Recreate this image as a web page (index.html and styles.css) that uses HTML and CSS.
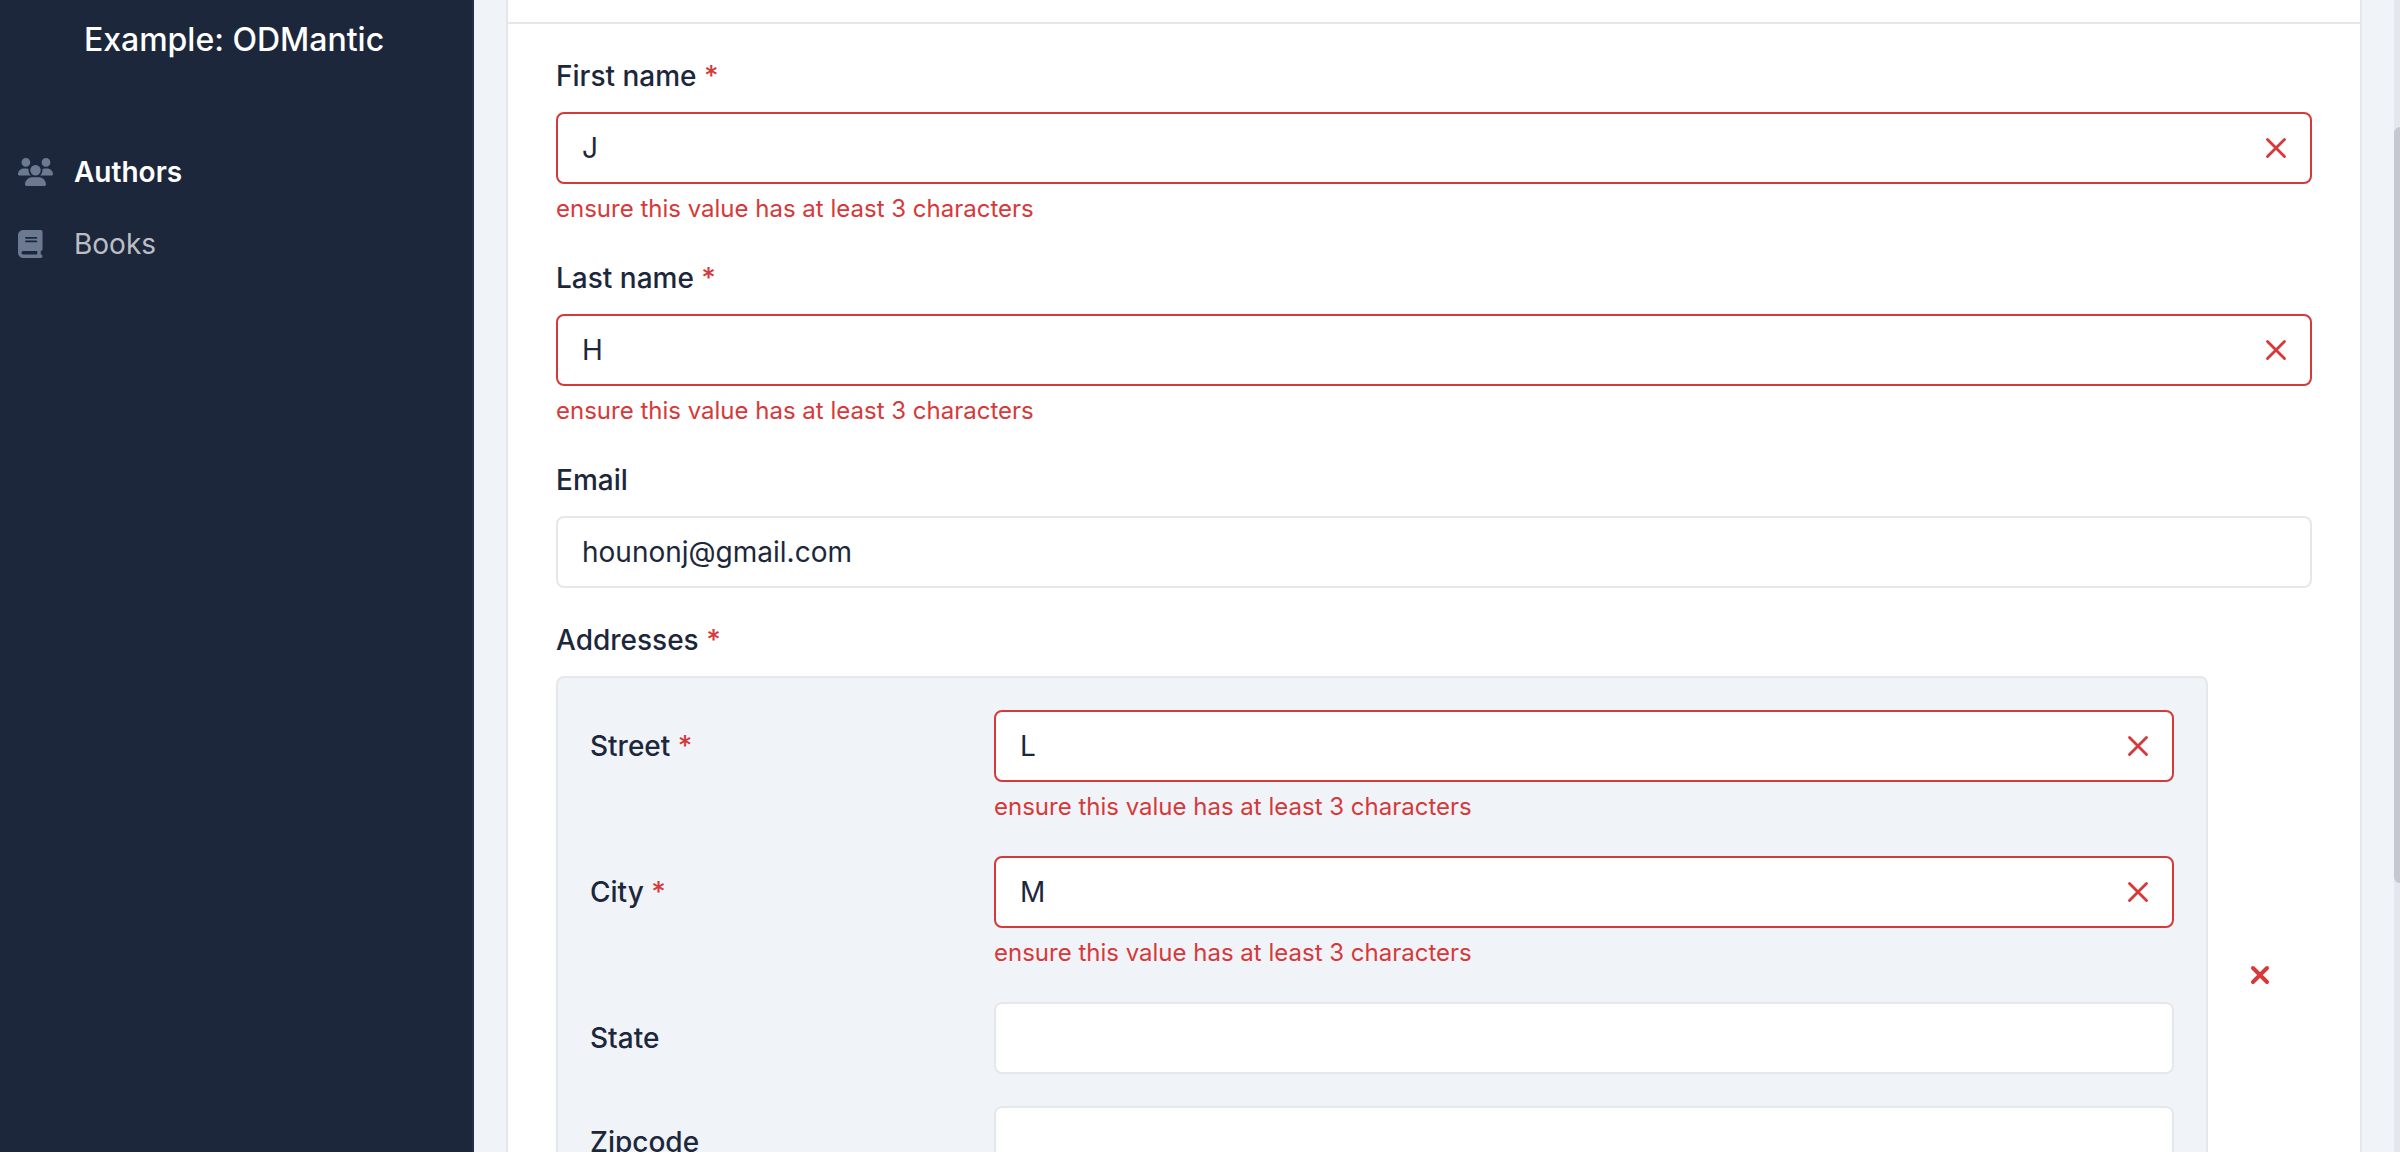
FILE: index.html
```html
<!DOCTYPE html>
<html lang="en">
<head>
  <meta charset="UTF-8" />
  <meta name="viewport" content="width=device-width, initial-scale=1.0"/>
  <title>Example: ODMantic</title>
  <link rel="stylesheet" href="styles.css">
</head>
<body>

<aside class="sidebar">
  <h1 class="brand">Example: ODMantic</h1>
  <nav class="menu">
    <a class="menu-link active" href="#authors">
      <span class="menu-icon">
        <svg viewBox="0 0 640 512" aria-hidden="true"><path d="M144 0a80 80 0 1 1 0 160A80 80 0 1 1 144 0zM512 0a80 80 0 1 1 0 160A80 80 0 1 1 512 0zM0 298.7C0 239.8 47.8 192 106.7 192h42.7c15.9 0 31 3.5 44.6 9.7c-1.3 7.2-1.9 14.7-1.9 22.3c0 38.2 16.8 72.5 43.3 96c-.2 0-.4 0-.7 0H21.3C9.6 320 0 310.4 0 298.7zM405.3 320c-.2 0-.4 0-.7 0c26.6-23.5 43.3-57.8 43.3-96c0-7.6-.7-15-1.9-22.3c13.6-6.3 28.7-9.7 44.6-9.7h42.7C592.2 192 640 239.8 640 298.7c0 11.8-9.6 21.3-21.3 21.3H405.3zM224 224a96 96 0 1 1 192 0 96 96 0 1 1 -192 0zM128 485.3C128 411.7 187.7 352 261.3 352H378.7C452.3 352 512 411.7 512 485.3c0 14.7-11.9 26.7-26.7 26.7H154.7c-14.7 0-26.7-11.9-26.7-26.7z"/></svg>
      </span>
      Authors
    </a>
    <a class="menu-link" href="#books">
      <span class="menu-icon">
        <svg viewBox="0 0 448 512" aria-hidden="true"><path d="M96 0C43 0 0 43 0 96V416c0 53 43 96 96 96H384h32c17.7 0 32-14.3 32-32s-14.3-32-32-32V384c17.7 0 32-14.3 32-32V32c0-17.7-14.3-32-32-32H384 96zm0 384H352v64H96c-17.7 0-32-14.3-32-32s14.3-32 32-32zm32-240c0-8.8 7.2-16 16-16H336c8.8 0 16 7.2 16 16s-7.2 16-16 16H144c-8.8 0-16-7.2-16-16zm16 48H336c8.8 0 16 7.2 16 16s-7.2 16-16 16H144c-8.8 0-16-7.2-16-16s7.2-16 16-16z"/></svg>
      </span>
      Books
    </a>
  </nav>
</aside>

<main class="page">
  <div class="card">
    <div class="card-header"></div>
    <form class="card-body">
      <div class="field">
        <label for="first-name">First name <span class="required">*</span></label>
        <input class="invalid" type="text" id="first-name" value="J" />
        <div class="error">ensure this value has at least 3 characters</div>
      </div>
      <div class="field">
        <label for="last-name">Last name <span class="required">*</span></label>
        <input class="invalid" type="text" id="last-name" value="H" />
        <div class="error">ensure this value has at least 3 characters</div>
      </div>
      <div class="field">
        <label for="email">Email</label>
        <input type="email" id="email" value="hounonj@gmail.com" />
      </div>

      <div class="group-title">Addresses <span class="required">*</span></div>
      <div class="list-item">
        <div class="address">
          <div class="row">
            <label for="street">Street <span class="required">*</span></label>
            <div>
              <input class="invalid" type="text" id="street" value="L" />
              <div class="error">ensure this value has at least 3 characters</div>
            </div>
          </div>
          <div class="row">
            <label for="city">City <span class="required">*</span></label>
            <div>
              <input class="invalid" type="text" id="city" value="M" />
              <div class="error">ensure this value has at least 3 characters</div>
            </div>
          </div>
          <div class="row">
            <label for="state">State</label>
            <input type="text" id="state" />
          </div>
          <div class="row">
            <label for="zipcode">Zipcode</label>
            <input type="text" id="zipcode" />
          </div>
        </div>
        <button class="remove" type="button" aria-label="Remove address">
          <svg viewBox="0 0 20 20" aria-hidden="true"><path d="M3 3l14 14M17 3L3 17"/></svg>
        </button>
      </div>
    </form>
  </div>
</main>

<div class="scrollbar"><div class="scrollbar-thumb"></div></div>

</body>
</html>
```
FILE: styles.css
```css
* {
  margin: 0;
  padding: 0;
  box-sizing: border-box;
}
body {
  display: flex;
  height: 100vh;
  overflow: hidden;
  font-family: Inter, sans-serif;
  font-size: 28px;
  line-height: 40px;
  color: #1d273b;
  background-color: #f0f4f9;
}

/* sidebar */
.sidebar {
  flex: 0 0 474px;
  background-color: #1d273b;
  border-right: 2px solid #243049;
}
.brand {
  padding: 20px 4px 20px 0;
  font-size: 32px;
  font-weight: 500;
  text-align: center;
  color: #fff;
}
.menu {
  padding-top: 56px;
}
.menu-link {
  display: flex;
  align-items: center;
  padding: 16px 18px;
  color: #bbbec4;
  text-decoration: none;
}
.menu-link.active {
  color: #fff;
  font-weight: 600;
}
.menu-icon {
  display: flex;
  width: 56px;
}
.menu-icon svg {
  height: 28px;
  fill: #6c7a91;
}

/* form */
.page {
  flex: 1;
  padding: 0 38px 0 32px;
}
.card {
  background-color: #fff;
  border: 2px solid #e6e7e9;
  border-top: none;
}
.card-header {
  height: 24px;
  border-bottom: 2px solid #e6e7e9;
}
.card-body {
  padding: 32px 48px;
}
.field {
  margin-bottom: 32px;
}
label, .group-title {
  display: block;
  font-weight: 500;
}
.field label, .group-title {
  margin-bottom: 16px;
}
.required {
  color: #d63939;
}
input {
  display: block;
  width: 100%;
  height: 72px;
  padding: 0 24px;
  font: inherit;
  color: inherit;
  background-color: #fff;
  border: 2px solid #e6e7e9;
  border-radius: 8px;
  outline: none;
}
input.invalid {
  padding-right: 72px;
  border-color: #d63939;
  background-image: url("data:image/svg+xml,%3Csvg xmlns='http://www.w3.org/2000/svg' viewBox='0 0 24 24' fill='none' stroke='%23d63939' stroke-width='2' stroke-linecap='round'%3E%3Cpath d='M18 6L6 18M6 6l12 12'/%3E%3C/svg%3E");
  background-repeat: no-repeat;
  background-position: right 17px center;
  background-size: 34px 34px;
}
.error {
  margin-top: 8px;
  font-size: 24px;
  line-height: 34px;
  color: #d63939;
}
.list-item {
  display: flex;
}
.address {
  flex: 1;
  margin-bottom: 32px;
  padding: 32px;
  background-color: #f0f4f9;
  border: 2px solid #e6e7e9;
  border-radius: 8px;
}
.address .row {
  display: grid;
  grid-template-columns: minmax(0, 372fr) minmax(0, 1180fr);
  column-gap: 32px;
  margin-bottom: 32px;
}
.row label {
  padding: 16px 0;
}
.remove {
  flex: 0 0 104px;
  background: none;
  border: none;
  cursor: pointer;
}
.remove svg {
  width: 20px;
  height: 20px;
  fill: none;
  stroke: #d63939;
  stroke-width: 4;
  stroke-linecap: round;
}

/* scrollbar over the right edge */
.scrollbar {
  position: absolute;
  top: 0;
  right: 0;
  bottom: 0;
  width: 6px;
  padding-top: 127px;
  background-color: #e4e8ee;
  overflow: hidden;
}
.scrollbar-thumb {
  width: 12px;
  height: 756px;
  background-color: #c4c9d1;
  border-radius: 6px;
}
```
